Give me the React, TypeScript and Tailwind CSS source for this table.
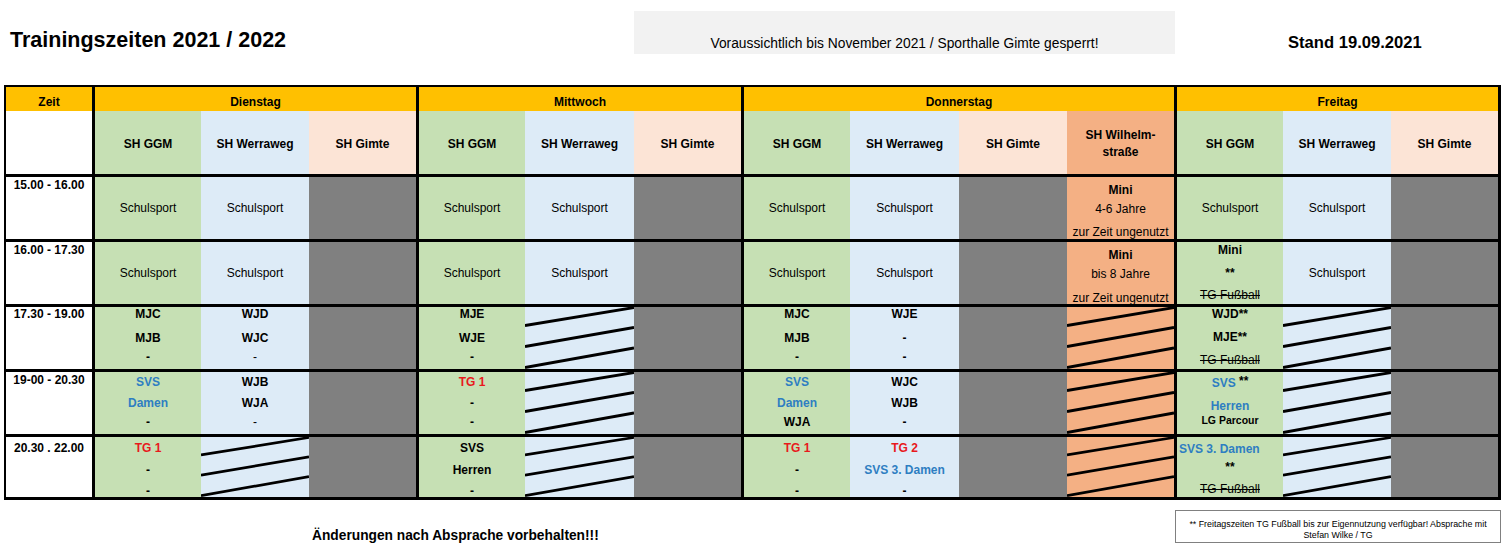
import React from 'react';

type Line = { t: React.ReactNode; c: string };
type Body =
  | { k: 'gray' }
  | { k: 'hatch' }
  | { k: 'center'; t: string }
  | { k: 'lines'; lines: Line[] };

const B = 'font-bold text-[12px]';
const R = 'font-normal text-[12px]';
const BLUE = 'font-bold text-[12px] text-[#2e7ec2]';
const RED = 'font-bold text-[12px] text-[#e8191c]';
const STRIKE = 'font-normal text-[12px] line-through';

const GREEN = 'bg-[#c6e0b4]';
const LBLUE = 'bg-[#ddebf7]';
const PEACH = 'bg-[#fce4d6]';
const GRAY = 'bg-[#808080]';
const ORANGE = 'bg-[#f4b084]';

type Venue = { name: React.ReactNode; h: string; b: string; first?: boolean };

const venues: Venue[] = [
  { name: 'SH GGM', h: GREEN, b: GREEN, first: true },
  { name: 'SH Werraweg', h: LBLUE, b: LBLUE },
  { name: 'SH Gimte', h: PEACH, b: GRAY },
  { name: 'SH GGM', h: GREEN, b: GREEN, first: true },
  { name: 'SH Werraweg', h: LBLUE, b: LBLUE },
  { name: 'SH Gimte', h: PEACH, b: GRAY },
  { name: 'SH GGM', h: GREEN, b: GREEN, first: true },
  { name: 'SH Werraweg', h: LBLUE, b: LBLUE },
  { name: 'SH Gimte', h: PEACH, b: GRAY },
  {
    name: (
      <>
        <div>SH Wilhelm-</div>
        <div>straße</div>
      </>
    ),
    h: ORANGE,
    b: ORANGE,
  },
  { name: 'SH GGM', h: GREEN, b: GREEN, first: true },
  { name: 'SH Werraweg', h: LBLUE, b: LBLUE },
  { name: 'SH Gimte', h: PEACH, b: GRAY },
];

const pAmini = ['mt-[6px]', 'mt-[5px]', 'mt-[9px]'];
const pBmini = ['mt-[6px]', 'mt-[5px]', 'mt-[10px]'];
const pBfr = ['mt-[1px]', 'mt-[9px]', 'mt-[8px]'];
const pC = ['mt-0', 'mt-[10px]', 'mt-[5px]'];
const pCfr = ['mt-0', 'mt-[9px]', 'mt-[9px]'];
const pD = ['mt-[3px]', 'mt-[7px]', 'mt-[5px]'];
const pDfr = ['mt-[4px]', 'mt-[9px]', 'mt-0'];
const pE = ['mt-[4px]', 'mt-[8px]', 'mt-[7px]'];
const pEfr = ['mt-[5px]', 'mt-[4px]', 'mt-[8px]'];

function L(items: [React.ReactNode, string][], pat: string[]): Body {
  return { k: 'lines', lines: items.map(([t, s], i) => ({ t, c: pat[i] + ' ' + s })) };
}

const S: Body = { k: 'center', t: 'Schulsport' };
const G: Body = { k: 'gray' };
const H: Body = { k: 'hatch' };

type Row = { zeit: string; zc: string; h: string; cells: Body[] };

const rows: Row[] = [
  {
    zeit: '15.00 - 16.00',
    zc: 'mt-[1px]',
    h: 'a',
    cells: [
      S, S, G, S, S, G, S, S, G,
      L([['Mini', B], ['4-6 Jahre', R], ['zur Zeit ungenutzt', R]], pAmini),
      S, S, G,
    ],
  },
  {
    zeit: '16.00 - 17.30',
    zc: 'mt-[1px]',
    h: 'b',
    cells: [
      S, S, G, S, S, G, S, S, G,
      L([['Mini', B], ['bis 8 Jahre', R], ['zur Zeit ungenutzt', R]], pBmini),
      L([['Mini', B], ['**', B], ['TG Fußball', STRIKE]], pBfr),
      S, G,
    ],
  },
  {
    zeit: '17.30 - 19.00',
    zc: 'mt-0',
    h: 'c',
    cells: [
      L([['MJC', B], ['MJB', B], ['-', B]], pC),
      L([['WJD', B], ['WJC', B], ['-', R]], pC),
      G,
      L([['MJE', B], ['WJE', B], ['-', B]], pC),
      H, G,
      L([['MJC', B], ['MJB', B], ['-', B]], pC),
      L([['WJE', B], ['-', B], ['-', B]], pC),
      G, H,
      L([['WJD**', B], ['MJE**', B], ['TG Fußball', STRIKE]], pCfr),
      H, G,
    ],
  },
  {
    zeit: '19-00 - 20.30',
    zc: 'mt-[1px]',
    h: 'd',
    cells: [
      L([['SVS', BLUE], ['Damen', BLUE], ['-', B]], pD),
      L([['WJB', B], ['WJA', B], ['-', R]], pD),
      G,
      L([['TG 1', RED], ['-', B], ['-', B]], pD),
      H, G,
      L([['SVS', BLUE], ['Damen', BLUE], ['WJA', B]], pD),
      L([['WJC', B], ['WJB', B], ['-', B]], pD),
      G, H,
      L(
        [
          [
            <>
              <span className="text-[#2e7ec2]">SVS</span> <span className="relative -top-[2px]">**</span>
            </>,
            B,
          ],
          ['Herren', BLUE],
          ['LG Parcour', 'font-bold text-[10.5px]'],
        ],
        pDfr
      ),
      H, G,
    ],
  },
  {
    zeit: '20.30 . 22.00',
    zc: 'mt-[4px]',
    h: 'e',
    cells: [
      L([['TG 1', RED], ['-', B], ['-', B]], pE),
      H, G,
      L([['SVS', B], ['Herren', B], ['-', B]], pE),
      H, G,
      L([['TG 1', RED], ['-', B], ['-', B]], pE),
      L([['TG 2', RED], ['SVS 3. Damen', BLUE], ['-', B]], pE),
      G, H,
      L([['SVS 3. Damen', BLUE + ' self-start pl-[2px]'], ['**', B], ['TG Fußball', STRIKE]], pEfr),
      H, G,
    ],
  },
];

function Hatch() {
  return (
    <svg className="block w-full h-full" viewBox="0 0 108 62" preserveAspectRatio="none">
      <line x1="0" y1="18.5" x2="108" y2="0.5" stroke="#000" strokeWidth="2.8" />
      <line x1="0" y1="39.5" x2="108" y2="20.5" stroke="#000" strokeWidth="2.8" />
      <line x1="0" y1="60.5" x2="108" y2="41" stroke="#000" strokeWidth="2.8" />
    </svg>
  );
}

function BodyCell({ body, v }: { body: Body; v: Venue }) {
  const base = `${v.b} border-t-[3px] border-t-black ${v.first ? 'border-l-[3px] border-l-black' : ''}`;
  if (body.k === 'gray') return <div className={`${base} bg-[#808080]`} />;
  if (body.k === 'hatch')
    return (
      <div className={base}>
        <Hatch />
      </div>
    );
  if (body.k === 'center')
    return (
      <div className={`${base} flex items-center justify-center text-[12px] leading-[14px] text-black`}>
        {body.t}
      </div>
    );
  return (
    <div className={`${base} flex flex-col items-center text-black`}>
      {body.lines.map((l, i) => (
        <div key={i} className={`h-[14px] leading-[14px] whitespace-nowrap ${l.c}`}>
          {l.t}
        </div>
      ))}
    </div>
  );
}

export default function App() {
  return (
    <div className="w-[1504px] h-[558px] bg-white text-black font-['Liberation_Sans',Arial,sans-serif] overflow-hidden">
      {/* top header */}
      <div className="flex h-[85px]">
        <div className="w-[634px] pl-[10px] pt-[28px]">
          <div className="text-[21.5px] leading-[25px] font-bold whitespace-nowrap">Trainingszeiten 2021 / 2022</div>
        </div>
        <div className="w-[541px] h-[43px] mt-[11px] bg-[#f2f2f2] pt-[25px] text-center">
          <div className="text-[13.8px] leading-[16px] whitespace-nowrap">
            Voraussichtlich bis November 2021 / Sporthalle Gimte gesperrt!
          </div>
        </div>
        <div className="pl-[113px] pt-[33px]">
          <div className="text-[16.6px] leading-[20px] font-bold whitespace-nowrap">Stand 19.09.2021</div>
        </div>
      </div>

      {/* table */}
      <div className="ml-[4px] w-[1497px] h-[415px] border-t-2 border-l-2 border-r-[3px] border-b-[3px] border-black grid grid-cols-[86px_109px_108px_107px_109px_109px_107px_109px_109px_108px_107px_109px_108px_107px] grid-rows-[24px_63px_65px_65px_65px_65px_63px]">
        {/* row 1 */}
        <div className="bg-[#ffc000] flex items-end justify-center pb-[2px] text-[12px] leading-[14px] font-bold">Zeit</div>
        <div className="col-span-3 bg-[#ffc000] border-l-[3px] border-l-black flex items-end justify-center pb-[2px] text-[12px] leading-[14px] font-bold">
          Dienstag
        </div>
        <div className="col-span-3 bg-[#ffc000] border-l-[3px] border-l-black flex items-end justify-center pb-[2px] text-[12px] leading-[14px] font-bold">
          Mittwoch
        </div>
        <div className="col-span-4 bg-[#ffc000] border-l-[3px] border-l-black flex items-end justify-center pb-[2px] text-[12px] leading-[14px] font-bold">
          Donnerstag
        </div>
        <div className="col-span-3 bg-[#ffc000] border-l-[3px] border-l-black flex items-end justify-center pb-[2px] text-[12px] leading-[14px] font-bold">
          Freitag
        </div>

        {/* row 2 */}
        <div className="bg-white" />
        {venues.map((v, i) => (
          <div
            key={i}
            className={`${v.h} ${v.first ? 'border-l-[3px] border-l-black' : ''} flex flex-col items-center justify-center pt-[3px] text-center text-[12px] leading-[17px] font-bold whitespace-nowrap`}
          >
            {v.name}
          </div>
        ))}

        {/* body rows */}
        {rows.map((r, ri) => (
          <React.Fragment key={ri}>
            <div className="bg-white border-t-[3px] border-t-black flex flex-col items-center">
              <div className={`h-[14px] leading-[14px] text-[12px] font-bold whitespace-nowrap ${r.zc}`}>{r.zeit}</div>
            </div>
            {r.cells.map((c, ci) => (
              <BodyCell key={ci} body={c} v={venues[ci]} />
            ))}
          </React.Fragment>
        ))}
      </div>

      {/* footer */}
      <div className="flex">
        <div className="w-[1175px] pl-[312px] pt-[28px]">
          <div className="text-[13.75px] leading-[16px] font-bold whitespace-nowrap">
            Änderungen nach Absprache vorbehalten!!!
          </div>
        </div>
        <div className="w-[326px] h-[33px] mt-[10px] border border-[#808080] pt-[8px] text-center text-[8.85px] leading-[11px] whitespace-nowrap">
          <div>** Freitagszeiten TG Fußball bis zur Eigennutzung verfügbar! Absprache mit</div>
          <div>Stefan Wilke / TG</div>
        </div>
      </div>
    </div>
  );
}
